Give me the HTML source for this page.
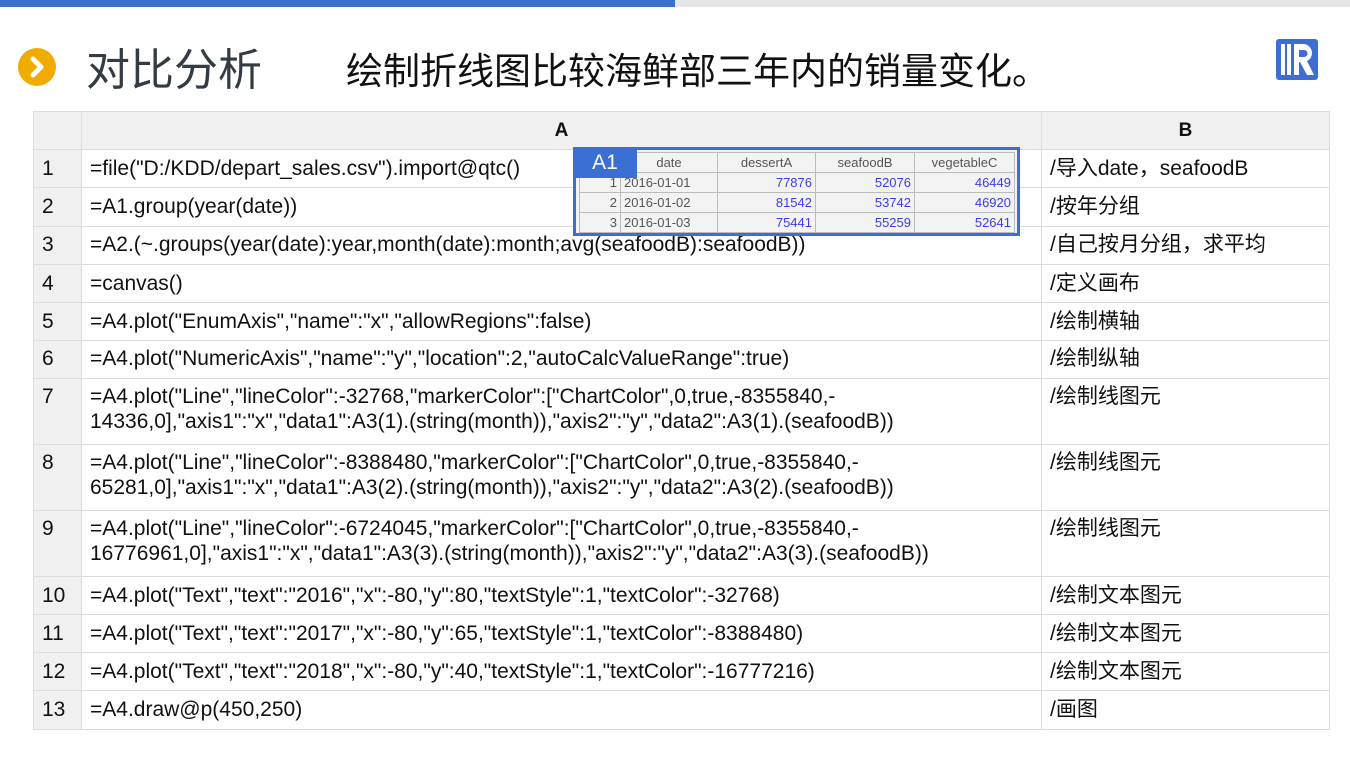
<!DOCTYPE html>
<html><head><meta charset="utf-8"><style>
body{margin:0;width:1350px;height:759px;background:#fff;position:relative;overflow:hidden;font-family:"Liberation Sans","Noto Sans CJK SC",sans-serif;}
.abs{position:absolute}
table.g{position:absolute;left:33px;top:111px;border-collapse:collapse;font-size:21px;color:#111;table-layout:fixed;width:1296px}
table.g td{border:1px solid #dcdcdc;padding:0 0 0 8px;vertical-align:top;line-height:25px;white-space:nowrap;overflow:hidden}
table.g td.n{background:#f0f0f0;padding-left:8px}
table.g tr.h td{background:#f0f0f0;text-align:center;font-weight:bold;vertical-align:middle;padding:0;font-size:19px}
.p{position:absolute;left:573px;top:147px;width:441px;height:83px;border:3px solid #3b6fd4;background:#f3f3f3}
.p table{border-collapse:collapse;font-size:13px;position:absolute;left:3px;top:2px}
.p td{border:1px solid #b8bcbc;height:19px;padding:0 3px;color:#555;text-align:right}
.p td.v{color:#3b3bf0}
</style></head><body>
<div class="abs" style="left:0;top:0;width:675px;height:7px;background:#3d6fcc"></div>
<div class="abs" style="left:675px;top:0;width:675px;height:7px;background:#e6e6e6"></div>
<div class="abs" style="left:18px;top:48px;width:38px;height:38px;border-radius:50%;background:#f0ad00"></div>
<svg class="abs" style="left:18px;top:48px" width="38" height="38"><path d="M15 11 L23 19 L15 27" stroke="#fff" stroke-width="5" fill="none" stroke-linecap="round" stroke-linejoin="round"/></svg>
<div class="abs" style="left:86px;top:38px;font-size:44px;color:#333c44;font-family:'Noto Sans CJK SC',sans-serif;line-height:56px">对比分析</div>
<div class="abs" style="left:346px;top:44px;font-size:37px;color:#111;font-family:'Noto Sans CJK SC',sans-serif;line-height:48px">绘制折线图比较海鲜部三年内的销量变化。</div>
<svg class="abs" style="left:1276px;top:39px" width="42" height="41"><rect width="42" height="41" rx="3" fill="#3b6fd4"/><rect x="5" y="5" width="4" height="31" fill="#fff"/><rect x="11" y="5" width="4" height="31" fill="#fff"/><path d="M18 5 H28 A9 9 0 0 1 31 22 L38 36 H31 L24 23 H23 V36 H18 Z M23 11 V18 H28 A3.5 3.5 0 0 0 28 11 Z" fill="#fff" fill-rule="evenodd"/></svg>
<table class="g">
<colgroup><col style="width:48px"><col style="width:960px"><col style="width:288px"></colgroup>
<tr class="h" style="height:38px"><td class="n"></td><td>A</td><td>B</td></tr>
<tr style="height:38px"><td class="n" style="padding-top:6px">1</td><td style="padding-top:6px">=file("D:/KDD/depart_sales.csv").import@qtc()</td><td style="padding-top:6px">/导入date，seafoodB</td></tr>
<tr style="height:39px"><td class="n" style="padding-top:6px">2</td><td style="padding-top:6px">=A1.group(year(date))</td><td style="padding-top:6px">/按年分组</td></tr>
<tr style="height:38px"><td class="n" style="padding-top:5px">3</td><td style="padding-top:5px">=A2.(~.groups(year(date):year,month(date):month;avg(seafoodB):seafoodB))</td><td style="padding-top:5px">/自己按月分组，求平均</td></tr>
<tr style="height:38px"><td class="n" style="padding-top:6px">4</td><td style="padding-top:6px">=canvas()</td><td style="padding-top:6px">/定义画布</td></tr>
<tr style="height:38px"><td class="n" style="padding-top:6px">5</td><td style="padding-top:6px">=A4.plot("EnumAxis","name":"x","allowRegions":false)</td><td style="padding-top:6px">/绘制横轴</td></tr>
<tr style="height:38px"><td class="n" style="padding-top:5px">6</td><td style="padding-top:5px">=A4.plot("NumericAxis","name":"y","location":2,"autoCalcValueRange":true)</td><td style="padding-top:5px">/绘制纵轴</td></tr>
<tr style="height:66px"><td class="n" style="padding-top:5px">7</td><td style="padding-top:5px">=A4.plot("Line","lineColor":-32768,"markerColor":["ChartColor",0,true,-8355840,-<br>14336,0],"axis1":"x","data1":A3(1).(string(month)),"axis2":"y","data2":A3(1).(seafoodB))</td><td style="padding-top:5px">/绘制线图元</td></tr>
<tr style="height:66px"><td class="n" style="padding-top:5px">8</td><td style="padding-top:5px">=A4.plot("Line","lineColor":-8388480,"markerColor":["ChartColor",0,true,-8355840,-<br>65281,0],"axis1":"x","data1":A3(2).(string(month)),"axis2":"y","data2":A3(2).(seafoodB))</td><td style="padding-top:5px">/绘制线图元</td></tr>
<tr style="height:66px"><td class="n" style="padding-top:5px">9</td><td style="padding-top:5px">=A4.plot("Line","lineColor":-6724045,"markerColor":["ChartColor",0,true,-8355840,-<br>16776961,0],"axis1":"x","data1":A3(3).(string(month)),"axis2":"y","data2":A3(3).(seafoodB))</td><td style="padding-top:5px">/绘制线图元</td></tr>
<tr style="height:38px"><td class="n" style="padding-top:6px">10</td><td style="padding-top:6px">=A4.plot("Text","text":"2016","x":-80,"y":80,"textStyle":1,"textColor":-32768)</td><td style="padding-top:6px">/绘制文本图元</td></tr>
<tr style="height:38px"><td class="n" style="padding-top:6px">11</td><td style="padding-top:6px">=A4.plot("Text","text":"2017","x":-80,"y":65,"textStyle":1,"textColor":-8388480)</td><td style="padding-top:6px">/绘制文本图元</td></tr>
<tr style="height:38px"><td class="n" style="padding-top:6px">12</td><td style="padding-top:6px">=A4.plot("Text","text":"2018","x":-80,"y":40,"textStyle":1,"textColor":-16777216)</td><td style="padding-top:6px">/绘制文本图元</td></tr>
<tr style="height:39px"><td class="n" style="padding-top:6px">13</td><td style="padding-top:6px">=A4.draw@p(450,250)</td><td style="padding-top:6px">/画图</td></tr>
</table>
<div class="p">
<table>
<tr><td style="width:34px"></td><td style="width:90px;text-align:center">date</td><td style="width:91px;text-align:center">dessertA</td><td style="width:92px;text-align:center">seafoodB</td><td style="width:93px;text-align:center">vegetableC</td></tr>
<tr><td>1</td><td style="text-align:left">2016-01-01</td><td class="v">77876</td><td class="v">52076</td><td class="v">46449</td></tr>
<tr><td>2</td><td style="text-align:left">2016-01-02</td><td class="v">81542</td><td class="v">53742</td><td class="v">46920</td></tr>
<tr><td>3</td><td style="text-align:left">2016-01-03</td><td class="v">75441</td><td class="v">55259</td><td class="v">52641</td></tr>
</table>
<div class="abs" style="left:-3px;top:-3px;width:64px;height:31px;background:#3b6fd4;color:#fff;font-size:21px;line-height:31px;text-align:center">A1</div>
</div>
</body></html>
